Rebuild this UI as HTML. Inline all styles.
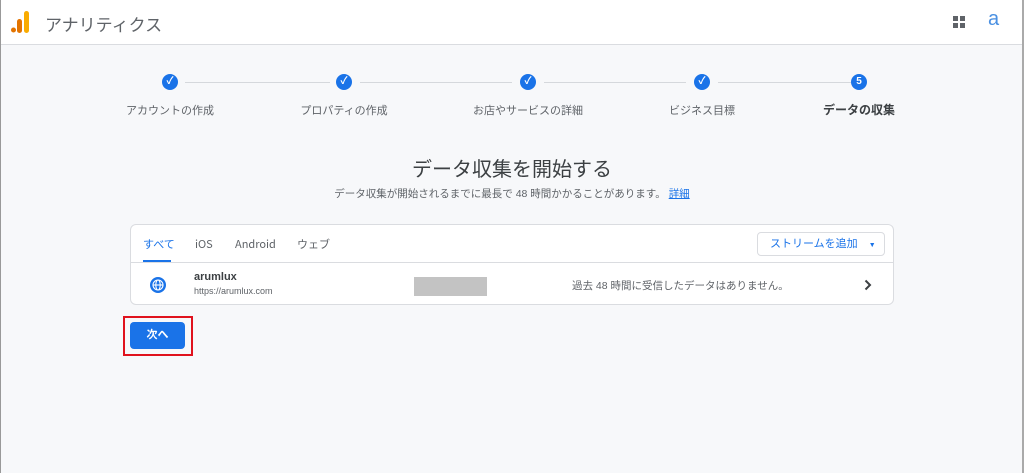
<!DOCTYPE html><html><head><meta charset="utf-8"><style>
*{margin:0;padding:0;box-sizing:border-box}
body{width:1024px;height:473px;overflow:hidden;background:#f7f8fa;font-family:"Liberation Sans","Noto Sans CJK JP",sans-serif;position:relative;color:#3c4043}
.a{position:absolute}
.hdr{left:0;top:0;width:1024px;height:45px;background:#fff;border-bottom:1px solid #dadce0}
.c{width:16px;height:16px;border-radius:50%;background:#1a73e8;color:#fff;font-size:10px;font-weight:bold;text-align:center;line-height:16px}
.ln{height:1px;background:#d5d8dc;top:82px}
.lb{font-size:11px;color:#5f6368;top:102px;text-align:center;width:160px}
.tb{top:11px;font-size:11px;line-height:16px;height:16px;color:#5f6368;font-family:"Noto Sans CJK JP",sans-serif}
</style></head><body>
<div class="a" style="left:0;top:0;width:1px;height:473px;background:#999;z-index:3"></div>
<div class="a" style="left:1022px;top:0;width:2px;height:473px;background:#aaa;z-index:3"></div>
<div class="a hdr">
<svg class="a" style="left:11px;top:11px" width="20" height="22" viewBox="0 0 20 22"><rect x="13" y="0" width="5" height="22" rx="2.5" fill="#f9ab00"/><rect x="6" y="8" width="5" height="14" rx="2.5" fill="#e37400"/><circle cx="2.5" cy="19" r="2.5" fill="#e37400"/></svg>
<div class="a" style="left:45px;top:11px;font-size:17px;color:#5f6368">アナリティクス</div>
<svg class="a" style="left:953px;top:16px" width="12" height="12"><rect x="0" y="0" width="5" height="5" fill="#5f6368"/><rect x="7" y="0" width="5" height="5" fill="#5f6368"/><rect x="0" y="7" width="5" height="5" fill="#5f6368"/><rect x="7" y="7" width="5" height="5" fill="#5f6368"/></svg>
<div class="a" style="left:988px;top:8px;font-size:20px;color:#4a90e2">a</div>
</div>
<div class="a ln" style="left:185px;width:145px"></div>
<div class="a ln" style="left:360px;width:152px"></div>
<div class="a ln" style="left:544px;width:142px"></div>
<div class="a ln" style="left:718px;width:133px"></div>
<div class="a c" style="left:162px;top:74px">✓</div>
<div class="a c" style="left:336px;top:74px">✓</div>
<div class="a c" style="left:520px;top:74px">✓</div>
<div class="a c" style="left:694px;top:74px">✓</div>
<div class="a c" style="left:851px;top:74px">5</div>
<div class="a lb" style="left:90px">アカウントの作成</div>
<div class="a lb" style="left:264px">プロパティの作成</div>
<div class="a lb" style="left:448px">お店やサービスの詳細</div>
<div class="a lb" style="left:622px">ビジネス目標</div>
<div class="a lb" style="left:779px;font-size:12px;font-weight:bold;color:#3c4043;top:101px">データの収集</div>
<div class="a" style="left:0;width:1024px;top:153px;text-align:center;font-size:20px;color:#3c4043">データ収集を開始する</div>
<div class="a" style="left:0;width:1024px;top:186px;text-align:center;font-size:10.5px;color:#5f6368">データ収集が開始されるまでに最長で 48 時間かかることがあります。 <span style="color:#1a73e8;text-decoration:underline">詳細</span></div>
<div class="a" style="left:130px;top:224px;width:764px;height:81px;background:#fff;border:1px solid #dadce0;border-radius:6px">
<div class="a" style="left:0;top:37px;width:762px;height:1px;background:#dadce0"></div>
<div class="a tb" style="left:12px;color:#1a73e8">すべて</div>
<div class="a" style="left:12px;top:35px;width:28px;height:2px;background:#1a73e8"></div>
<div class="a tb" style="left:64px">iOS</div>
<div class="a tb" style="left:104px">Android</div>
<div class="a tb" style="left:166px">ウェブ</div>
<div class="a" style="left:626px;top:7px;width:128px;height:24px;border:1px solid #dadce0;border-radius:4px;font-size:11px;color:#1a73e8;line-height:22px;padding-left:12px">ストリームを追加 <span style="font-size:7px;margin-left:8px">▼</span></div>
<svg class="a" style="left:18px;top:51px" width="18" height="18" viewBox="0 0 18 18"><circle cx="9" cy="9" r="8" fill="#1a73e8"/><g stroke="#fff" stroke-width="1.1" fill="none"><circle cx="9" cy="9" r="5"/><ellipse cx="9" cy="9" rx="2.2" ry="5"/><line x1="4" y1="9" x2="14" y2="9"/></g></svg>
<div class="a" style="left:63px;top:46px;font-size:11px;font-weight:bold;color:#3c4043">arumlux</div>
<div class="a" style="left:63px;top:61px;font-size:9px;color:#5f6368">https://arumlux.com</div>
<div class="a" style="left:283px;top:52px;width:73px;height:19px;background:#c3c3c3"></div>
<div class="a" style="left:441px;top:53px;font-size:10.5px;color:#5f6368">過去 48 時間に受信したデータはありません。</div>
<svg class="a" style="left:733px;top:54px" width="8" height="12" viewBox="0 0 8 12"><path d="M1.5 1.5L6 6 1.5 10.5" stroke="#3c4043" stroke-width="2" fill="none"/></svg>
</div>
<div class="a" style="left:123px;top:316px;width:70px;height:40px;border:2px solid #e0121d"></div>
<div class="a" style="left:130px;top:322px;width:55px;height:27px;background:#1a73e8;border-radius:4px;color:#fff;font-size:11px;font-weight:bold;text-align:center;line-height:27px">次へ</div>
</body></html>
